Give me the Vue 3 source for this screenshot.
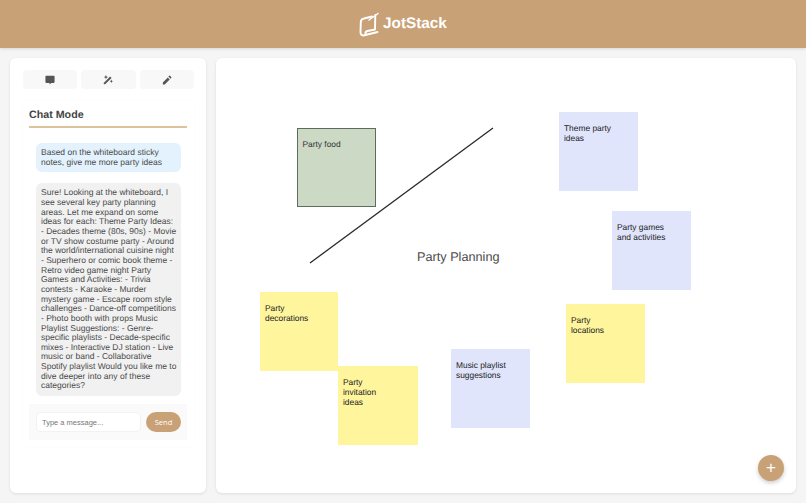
<script setup>
const notes = [
  { text: 'Theme party ideas', x: 343, y: 54, w: 79, color: '#e0e5fc' },
  { text: 'Party games and activities', x: 396, y: 153, w: 79, color: '#e0e5fc' },
  { text: 'Party decorations', x: 44, y: 234, w: 78, color: '#fff59d' },
  { text: 'Party invitation ideas', x: 122, y: 308, w: 80, color: '#fff59d' },
  { text: 'Music playlist suggestions', x: 235, y: 291, w: 79, color: '#e0e5fc' },
  { text: 'Party locations', x: 350, y: 246, w: 79, color: '#fff59d' },
]

const reply = 'Sure! Looking at the whiteboard, I see several key party planning areas. Let me expand on some ideas for each: Theme Party Ideas: - Decades theme (80s, 90s) - Movie or TV show costume party - Around the world/international cuisine night - Superhero or comic book theme - Retro video game night Party Games and Activities: - Trivia contests - Karaoke - Murder mystery game - Escape room style challenges - Dance-off competitions - Photo booth with props Music Playlist Suggestions: - Genre-specific playlists - Decade-specific mixes - Interactive DJ station - Live music or band - Collaborative Spotify playlist Would you like me to dive deeper into any of these categories?'
</script>

<template>
  <div class="app">
    <header class="header">
      <svg class="logo" viewBox="359 11 21 25" fill="none" stroke="#fff" stroke-width="1.900" stroke-linecap="round" stroke-linejoin="round">
        <path d="M372 15.500 L364 17.500 Q361 18 360.800 21 L360.500 31 Q360.500 34.700 363.500 34.500 L377.500 31" />
        <path d="M375.300 14 L375 28.500 L367.500 30 Q365 30.500 365.500 33.500" />
        <path d="M369 19 L378 12.500" stroke-width="1.500" />
      </svg>
      <span class="brand">JotStack</span>
    </header>

    <main class="main">
      <aside class="sidebar">
        <div class="tabs">
          <button class="tab">
            <svg viewBox="0 0 24 24"><path d="M3 2h18a2 2 0 0 1 2 2v13a2 2 0 0 1-2 2h-6l-4 4v-4H3a2 2 0 0 1-2-2V4a2 2 0 0 1 2-2z" /></svg>
          </button>
          <button class="tab">
            <svg viewBox="0 0 24 24"><path d="M1 19.500 17 3.500l3.500 3.500-16 16z" /><path d="M7 0l1.500 3.500L12 5 8.500 6.500 7 10 5.500 6.500 2 5l3.500-1.500zM20 11l1.300 2.700L24 15l-2.700 1.300L20 19l-1.300-2.700L16 15l2.700-1.300z" /></svg>
          </button>
          <button class="tab">
            <svg viewBox="0 0 24 24"><path d="M2 18v4.500h4.500L18.500 10.500 14 6zM22.300 6.700a1.200 1.200 0 0 0 0-1.700l-3.300-3.300a1.200 1.200 0 0 0-1.700 0l-2 2 5 5z" /></svg>
          </button>
        </div>

        <section class="chat">
          <h2 class="chat-title">Chat Mode</h2>
          <div class="messages">
            <div class="msg user">Based on the whiteboard sticky notes, give me more party ideas</div>
            <div class="msg bot">{{ reply }}</div>
          </div>
          <div class="composer">
            <input class="input" placeholder="Type a message..." />
            <button class="send">Send</button>
          </div>
        </section>
      </aside>

      <section class="board">
        <svg class="line" width="580" height="435">
          <line x1="94" y1="205" x2="277" y2="70" stroke="#2a2a2a" stroke-width="1.300" />
        </svg>
        <div class="shape" style="left: 81px; top: 70px">Party food</div>
        <div class="board-title">Party Planning</div>
        <div
          v-for="n in notes"
          :key="n.text"
          class="note"
          :style="{ left: n.x + 'px', top: n.y + 'px', width: n.w + 'px', background: n.color }"
        >{{ n.text }}</div>
        <button class="fab">+</button>
      </section>
    </main>
  </div>
</template>

<style>
html, body { margin: 0; background: #f5f5f5; }
</style>

<style scoped>
.app { width: 806px; height: 503px; display: flex; flex-direction: column; overflow: hidden; font-family: "Liberation Sans", Arial, sans-serif; text-rendering: geometricPrecision; }
.header { height: 48px; flex: none; display: flex; align-items: center; justify-content: center; gap: 3px; background: #c9a176; box-shadow: 0 1px 3px rgba(0,0,0,.12); }
.logo { width: 21px; height: 25px; }
.brand { color: #fff; font-size: 15.300px; font-weight: 700; }

.main { flex: 1; display: flex; gap: 10px; padding: 10px; min-height: 0; }
.sidebar { width: 196px; flex: none; box-sizing: border-box; padding: 12px 12px 0 13px; background: #fff; border-radius: 6px; box-shadow: 0 1px 3px rgba(0,0,0,.1); }
.tabs { display: flex; gap: 4px; }
.tab { flex: 1; height: 19px; padding: 0; display: flex; align-items: center; justify-content: center; background: #f8f8f8; border: none; border-radius: 4px; }
.tab svg { width: 10px; height: 10px; fill: #555; }

.chat { margin-top: 11px; padding: 8px 7px 7px 6px; border-radius: 4px; box-shadow: 0 0 3px rgba(0,0,0,.025); }
.chat-title { margin: 0; padding-bottom: 4px; font-size: 10.700px; line-height: 14px; color: #444; border-bottom: 2px solid #dcc39c; }
.messages { display: flex; flex-direction: column; gap: 11px; padding: 15px 6px 8px 7px; }
.msg { padding: 5px 3px 5px 5px; font-size: 8.500px; line-height: 9.650px; color: #4a4a4a; border-radius: 6px; }
.user { background: #e3f2fd; }
.bot { background: #f1f1f1; }
.composer { display: flex; align-items: center; gap: 5px; padding: 8px 6px 8px 7px; background: #fafafa; }
.input { flex: 1; min-width: 0; height: 20px; box-sizing: border-box; padding: 0 5px; font: 7.500px "Liberation Sans", Arial, sans-serif; background: #fff; border: 1px solid #f2f2f2; border-radius: 4px; }
.input::placeholder { color: #777; }
.send { width: 35px; height: 20px; padding: 0; font: 7.500px "Open Sans", sans-serif; color: #fff; background: #c9a176; border: none; border-radius: 10px; }

.board { flex: 1; position: relative; background: #fff; border-radius: 6px; box-shadow: 0 1px 3px rgba(0,0,0,.1); }
.line { position: absolute; left: 0; top: 0; }
.shape { position: absolute; width: 79px; height: 79px; box-sizing: border-box; padding: 9.500px 4.500px; font-size: 8.400px; line-height: 10px; color: #333; background: #ccd9c5; border: 1px solid #5f6b5f; }
.board-title { position: absolute; left: 201px; top: 191px; font-size: 12.700px; line-height: 16px; color: #4a4a4a; }
.note { position: absolute; height: 79px; box-sizing: border-box; padding: 11px 21px 11px 5px; font-size: 8.400px; line-height: 10px; color: #222; }
.fab { position: absolute; right: 12px; bottom: 12px; width: 26px; height: 26px; padding: 0; font: 17px/26px "Liberation Sans", sans-serif; color: #fff; background: #c9a176; border: none; border-radius: 50%; box-shadow: 0 2px 4px rgba(0,0,0,.2); }
</style>
